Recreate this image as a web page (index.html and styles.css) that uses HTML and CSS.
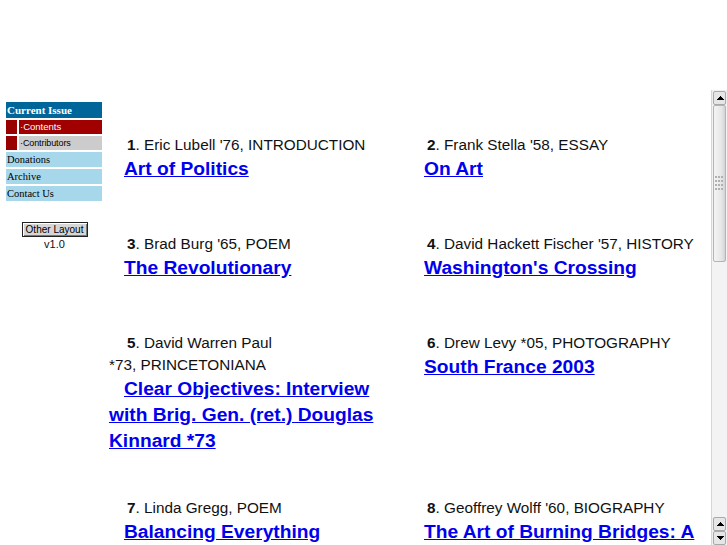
FILE: index.html
```html
<!DOCTYPE html>
<html>
<head>
<meta charset="utf-8">
<title>Contents</title>
<link rel="stylesheet" href="styles.css">
</head>
<body>
<div class="top"></div>
<div class="main">
  <aside class="nav">
    <div class="nav-head">Current Issue</div>
    <div class="nav-sub">
      <span class="nav-mark"></span>
      <span class="nav-sublink active">&middot;Contents</span>
    </div>
    <div class="nav-sub">
      <span class="nav-mark"></span>
      <span class="nav-sublink">&middot;Contributors</span>
    </div>
    <div class="nav-item">Donations</div>
    <div class="nav-item">Archive</div>
    <div class="nav-item">Contact Us</div>
    <div class="nav-tools">
      <button class="layout-btn">Other Layout</button>
      <div class="version">v1.0</div>
    </div>
  </aside>
  <div class="panel">
    <div class="contents">
      <div class="item">
        <p class="byline"><b>1</b>. Eric Lubell '76, INTRODUCTION</p>
        <a class="title" href="#">Art of Politics</a>
      </div>
      <div class="item">
        <p class="byline"><b>2</b>. Frank Stella '58, ESSAY</p>
        <a class="title" href="#">On Art</a>
      </div>
      <div class="item">
        <p class="byline"><b>3</b>. Brad Burg '65, POEM</p>
        <a class="title" href="#">The Revolutionary</a>
      </div>
      <div class="item">
        <p class="byline"><b>4</b>. David Hackett Fischer '57, HISTORY</p>
        <a class="title" href="#">Washington's Crossing</a>
      </div>
      <div class="item">
        <p class="byline"><b>5</b>. David Warren Paul<br>*73, PRINCETONIANA</p>
        <a class="title" href="#">Clear Objectives: Interview with Brig. Gen. (ret.) Douglas Kinnard *73</a>
      </div>
      <div class="item">
        <p class="byline"><b>6</b>. Drew Levy *05, PHOTOGRAPHY</p>
        <a class="title" href="#">South France 2003</a>
      </div>
      <div class="item">
        <p class="byline"><b>7</b>. Linda Gregg, POEM</p>
        <a class="title" href="#">Balancing Everything</a>
      </div>
      <div class="item">
        <p class="byline"><b>8</b>. Geoffrey Wolff '60, BIOGRAPHY</p>
        <a class="title" href="#">The Art of Burning Bridges: A Life of John O'Hara</a>
      </div>
    </div>
  </div>
  <div class="scrollbar">
    <div class="sb-btn sb-up"></div>
    <div class="sb-track">
      <div class="sb-thumb"><span class="sb-grip"></span></div>
    </div>
    <div class="sb-btn sb-up"></div>
    <div class="sb-btn sb-down"></div>
  </div>
</div>
</body>
</html>
```
FILE: styles.css
```css
html, body {
  margin: 0;
  padding: 0;
  background: #ffffff;
}
body {
  width: 727px;
  height: 545px;
  overflow: hidden;
  font-family: "Liberation Sans", Arial, sans-serif;
}
.top {
  height: 90px;
}
.main {
  display: flex;
  align-items: flex-start;
  height: 455px;
}
.nav {
  width: 96px;
  margin: 12px 0 0 6px;
  display: flex;
  flex-direction: column;
  gap: 2px;
}
.nav-head {
  height: 16px;
  background: #006699;
  color: #ffffff;
  font-family: "Liberation Serif", "Times New Roman", serif;
  font-weight: bold;
  font-size: 11px;
  line-height: 16px;
  padding-left: 1px;
}
.nav-sub {
  display: flex;
  gap: 2px;
  height: 14px;
}
.nav-mark {
  width: 11px;
  background: #990000;
}
.nav-sublink {
  flex: 1;
  background: #cccccc;
  color: #000000;
  font-size: 9px;
  line-height: 14px;
  padding-left: 1px;
  letter-spacing: -0.1px;
}
.nav-sublink.active {
  background: #a00000;
  color: #ffffff;
  font-size: 9.5px;
  letter-spacing: 0;
}
.nav-item {
  height: 15px;
  background: #a6d7ea;
  color: #000000;
  font-family: "Liberation Serif", "Times New Roman", serif;
  font-size: 10.5px;
  line-height: 15px;
  padding-left: 1px;
}
.nav-tools {
  margin-top: 19px;
  display: flex;
  flex-direction: column;
  align-items: center;
}
.layout-btn {
  width: 66px;
  height: 15px;
  padding: 0;
  margin: 0 0 0 1px;
  background: #d6d6d6;
  border: 1px solid #222222;
  box-shadow: inset 1px 1px 0 #ffffff, inset -1px -1px 0 #7a7a7a;
  font-family: "Liberation Sans", Arial, sans-serif;
  font-size: 10px;
  line-height: 13px;
  color: #000000;
}
.version {
  margin-top: 1px;
  font-size: 11px;
  line-height: 13px;
  color: #111111;
  padding-left: 1px;
}
.panel {
  flex: 1;
  margin-left: 1px;
  height: 455px;
  overflow: hidden;
}
.contents {
  display: grid;
  grid-template-columns: 300px 300px;
  row-gap: 43px;
  padding: 44px 0 0 6px;
  align-items: start;
}
.item {
  min-height: 56px;
  display: flex;
  flex-direction: column;
  align-items: flex-start;
}
.byline {
  margin: 0;
  font-size: 15.3px;
  line-height: 22px;
  color: #111111;
  text-indent: 18px;
}
.title {
  display: block;
  font-size: 19.2px;
  font-weight: bold;
  line-height: 26px;
  color: #0000ee;
  text-decoration: underline;
  text-indent: 15px;
}
.scrollbar {
  width: 16px;
  height: 455px;
  display: flex;
  flex-direction: column;
  background: #efefef;
  border-left: 1px solid #d6d6d6;
  box-sizing: border-box;
}
.sb-btn {
  height: 14px;
  margin: 0 1px;
  box-sizing: border-box;
  background-color: #e6e6e6;
  border: 1px solid #a9a9a9;
  border-radius: 2px;
  background-repeat: no-repeat;
  background-position: center;
  background-size: 8px 4px;
}
.sb-btn:first-child {
  margin-top: 1px;
}
.sb-up {
  background-image: conic-gradient(from 135deg at 50% 0, #000 0 90deg, transparent 90deg);
}
.sb-down {
  background-image: conic-gradient(from -45deg at 50% 100%, #000 0 90deg, transparent 90deg);
}
.sb-track {
  flex: 1;
  background: #f3f3f3;
}
.sb-thumb {
  height: 157px;
  margin: 0 1px;
  box-sizing: border-box;
  background: linear-gradient(to right, #f4f4f4, #e6e6e6 70%, #d2d2d2);
  border: 1px solid #b4b4b4;
  border-radius: 2px;
  display: flex;
  align-items: center;
  justify-content: center;
}
.sb-grip {
  width: 9px;
  height: 15px;
  background-image: radial-gradient(circle at 1px 1px, #b0b0b0 0.9px, transparent 1.1px);
  background-size: 3px 4px;
}
```
